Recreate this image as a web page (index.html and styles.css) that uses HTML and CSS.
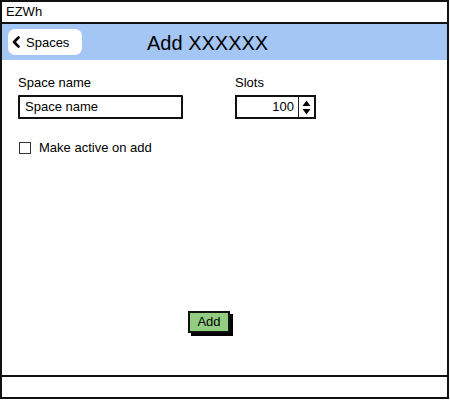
FILE: index.html
```html
<!DOCTYPE html>
<html>
<head>
<meta charset="utf-8">
<link rel="stylesheet" href="styles.css">
</head>
<body>
<div class="window">
  <div class="titlebar">EZWh</div>
  <div class="header">
    <button class="back">
      <svg class="chev" width="9" height="12" viewBox="0 0 9 12"><path d="M6.5 1.5 L2 6 L6.5 10.5" fill="none" stroke="#000" stroke-width="2.6" stroke-linecap="round" stroke-linejoin="round"/></svg>
      <span>Spaces</span>
    </button>
    <h1 class="title">Add XXXXXX</h1>
  </div>
  <div class="main">
    <div class="fields">
      <div class="field name-field">
        <label class="label">Space name</label>
        <div class="textbox">Space name</div>
      </div>
      <div class="field slots-field">
        <label class="label">Slots</label>
        <div class="spinbox">
          <div class="spin-value">100</div>
          <div class="spin-btn">
            <svg width="9" height="15" viewBox="0 0 9 15"><path d="M4.5 0.5 L8.5 6 L0.5 6 Z" fill="#000"/><path d="M0.5 9 L8.5 9 L4.5 14.5 Z" fill="#000"/></svg>
          </div>
        </div>
      </div>
    </div>
    <div class="check-row">
      <span class="checkbox"></span>
      <span class="check-label">Make active on add</span>
    </div>
    <div class="actions">
      <button class="add-btn">Add</button>
    </div>
  </div>
  <div class="footer"></div>
</div>
</body>
</html>
```
FILE: styles.css
```css
* { box-sizing: border-box; }
html, body { margin: 0; padding: 0; background: #fff; }
body { font-family: "Liberation Sans", Arial, sans-serif; color: #000; }

.window {
  width: 449px;
  height: 399px;
  border: 2px solid #111;
  display: flex;
  flex-direction: column;
}

.titlebar {
  height: 22px;
  border-bottom: 2px solid #111;
  font-size: 13px;
  line-height: 20px;
  padding-left: 4px;
}

.header {
  height: 36px;
  background: #a3c6f5;
  display: flex;
  align-items: center;
  padding-left: 6px;
  gap: 65px;
}

.back {
  width: 74px;
  height: 26px;
  border: none;
  border-radius: 7px;
  background: #fff;
  display: flex;
  align-items: center;
  gap: 5px;
  padding: 0 0 0 4px;
  font-family: inherit;
  font-size: 13px;
  color: #000;
}
.chev { display: block; }

.title {
  margin: 0;
  font-size: 20px;
  font-weight: normal;
  line-height: 24px;
  padding-top: 1px;
}

.main {
  flex: 1;
  border-bottom: 2px solid #111;
  padding: 15px 0 0 16px;
  display: flex;
  flex-direction: column;
}

.fields {
  display: flex;
  gap: 52px;
}

.field { display: flex; flex-direction: column; gap: 4px; }

.label {
  font-size: 13px;
  line-height: 16px;
}

.textbox {
  width: 165px;
  height: 24px;
  border: 2px solid #111;
  border-radius: 1px;
  font-size: 13px;
  line-height: 20px;
  padding-left: 5px;
}

.spinbox {
  width: 81px;
  height: 24px;
  border: 2px solid #111;
  display: flex;
}
.spin-value {
  flex: 1;
  text-align: right;
  font-size: 13px;
  line-height: 20px;
  padding-right: 4px;
  border-right: 1.5px solid #222;
}
.spin-btn {
  width: 15px;
  display: flex;
  align-items: center;
  justify-content: center;
}
.spin-btn svg { display: block; }

.check-row {
  display: flex;
  align-items: center;
  gap: 8px;
  margin-top: 21px;
  padding-left: 1px;
}
.checkbox {
  width: 12px;
  height: 12px;
  border: 1.5px solid #333;
  background: #fff;
}
.check-label {
  font-size: 13px;
  line-height: 16px;
}

.actions {
  margin-top: 155px;
  padding-left: 170px;
}
.add-btn {
  width: 42px;
  height: 22px;
  border: 2px solid #111;
  background: #92cd82;
  box-shadow: 3px 3px 0 #000;
  font-family: inherit;
  font-size: 13px;
  color: #000;
  padding: 0;
  line-height: 18px;
}

.footer {
  height: 20px;
}
```
